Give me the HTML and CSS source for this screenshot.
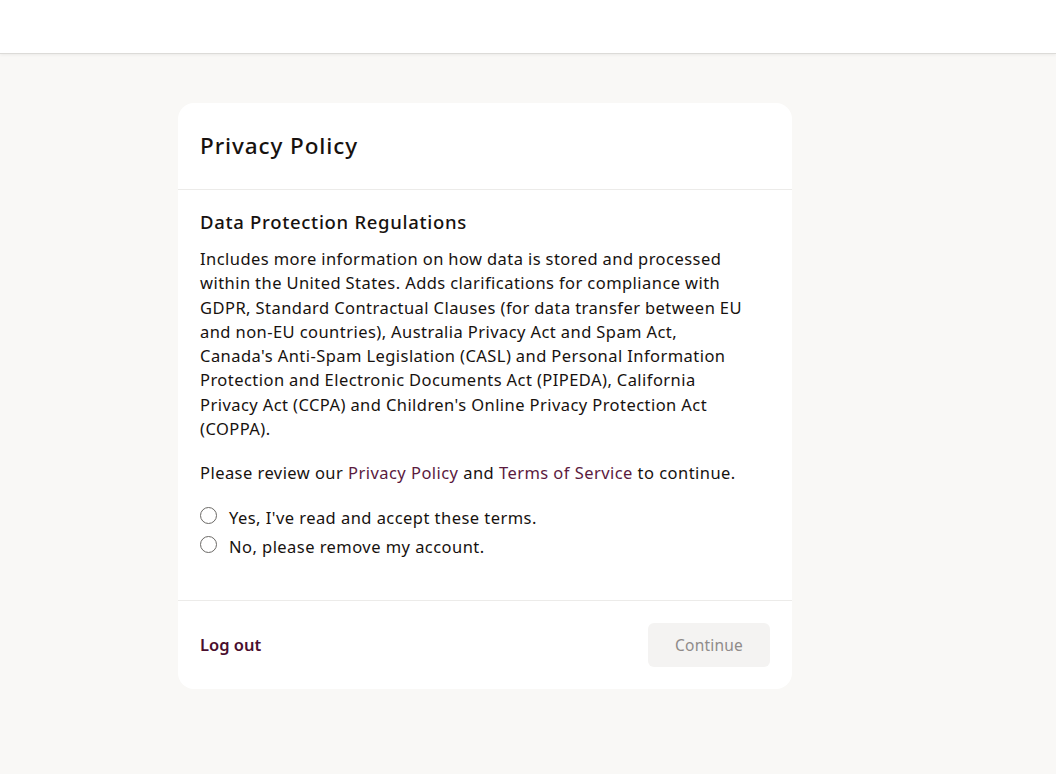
FILE: index.html
```html
<!DOCTYPE html>
<html lang="en">
<head>
    <meta charset="UTF-8">
    <meta name="viewport" content="width=device-width, initial-scale=1.0">
    <title>Privacy Policy</title>
    <link rel="stylesheet" href="styles.css">
</head>
<body>
    <header class="topbar"></header>

    <main class="page">
        <section class="card">
            <div class="card-head">
                <h1>Privacy Policy</h1>
            </div>

            <div class="card-body">
                <h2>Data Protection Regulations</h2>
                <p class="summary">Includes more information on how data is stored and processed within the United States. Adds clarifications for compliance with GDPR, Standard Contractual Clauses (for data transfer between EU and non-EU countries), Australia Privacy Act and Spam Act, Canada's Anti-Spam Legislation (CASL) and Personal Information Protection and Electronic Documents Act (PIPEDA), California Privacy Act (CCPA) and Children's Online Privacy Protection Act (COPPA).</p>
                <p>Please review our <a href="#">Privacy Policy</a> and <a href="#">Terms of Service</a> to continue.</p>

                <div class="choices">
                    <label class="choice">
                        <input type="radio" name="terms">
                        <span>Yes, I've read and accept these terms.</span>
                    </label>
                    <label class="choice">
                        <input type="radio" name="terms">
                        <span>No, please remove my account.</span>
                    </label>
                </div>
            </div>

            <div class="card-foot">
                <a href="#" class="logout">Log out</a>
                <button class="continue" disabled>Continue</button>
            </div>
        </section>
    </main>
</body>
</html>
```

FILE: styles.css
```css
body{
    margin: 0;
    background: #f9f8f6;
    font-family: "Noto Sans", "Open Sans", sans-serif;
    color: #17120f;
}

.topbar{
    height: 53px;
    background: #fff;
    border-bottom: 1px solid #dcdbd8;
    box-shadow: 0 1px 3px rgba(0, 0, 0, 0.06);
}

.page{
    padding: 49px 0 80px 178px;
}

.card{
    width: 614px;
    background: #fff;
    border-radius: 16px;
}

.card-head{
    padding: 28px 22px;
    border-bottom: 1px solid #ecebe9;
}

h1{
    margin: 0;
    font-size: 22.5px;
    line-height: 30px;
    font-weight: 500;
    letter-spacing: 0.9px;
}

.card-body{
    padding: 19px 22px 41px;
}

h2{
    margin: 0 0 12px;
    font-size: 18.5px;
    line-height: 26px;
    font-weight: 500;
    letter-spacing: 0.7px;
}

p{
    margin: 0 0 20px;
    font-size: 16.5px;
    line-height: 24.3px;
    letter-spacing: 0.45px;
}

.summary{
    max-width: 543px;
    word-spacing: -0.2px;
}

a{
    color: #5b1a3e;
    text-decoration: none;
}

.choices{
    display: flex;
    flex-direction: column;
    gap: 5px;
    margin-top: 7px;
}

.choice{
    display: flex;
    align-items: center;
    gap: 12px;
    font-size: 16.5px;
    line-height: 24px;
    letter-spacing: 0.45px;
}

.choice input{
    appearance: none;
    margin: 0;
    width: 17px;
    height: 17px;
    border: 1px solid #6b6966;
    border-radius: 50%;
    background: #fff;
    position: relative;
    top: -2px;
}

.card-foot{
    display: flex;
    justify-content: space-between;
    align-items: center;
    padding: 22px 22px;
    border-top: 1px solid #ecebe9;
}

.logout{
    font-size: 16.5px;
    font-weight: 600;
    color: #4a0f2e;
}

.continue{
    width: 122px;
    height: 44px;
    border: none;
    border-radius: 6px;
    background: #f4f3f2;
    color: #8f8b8a;
    font-family: inherit;
    font-size: 15.5px;
    letter-spacing: 0.2px;
}
```
